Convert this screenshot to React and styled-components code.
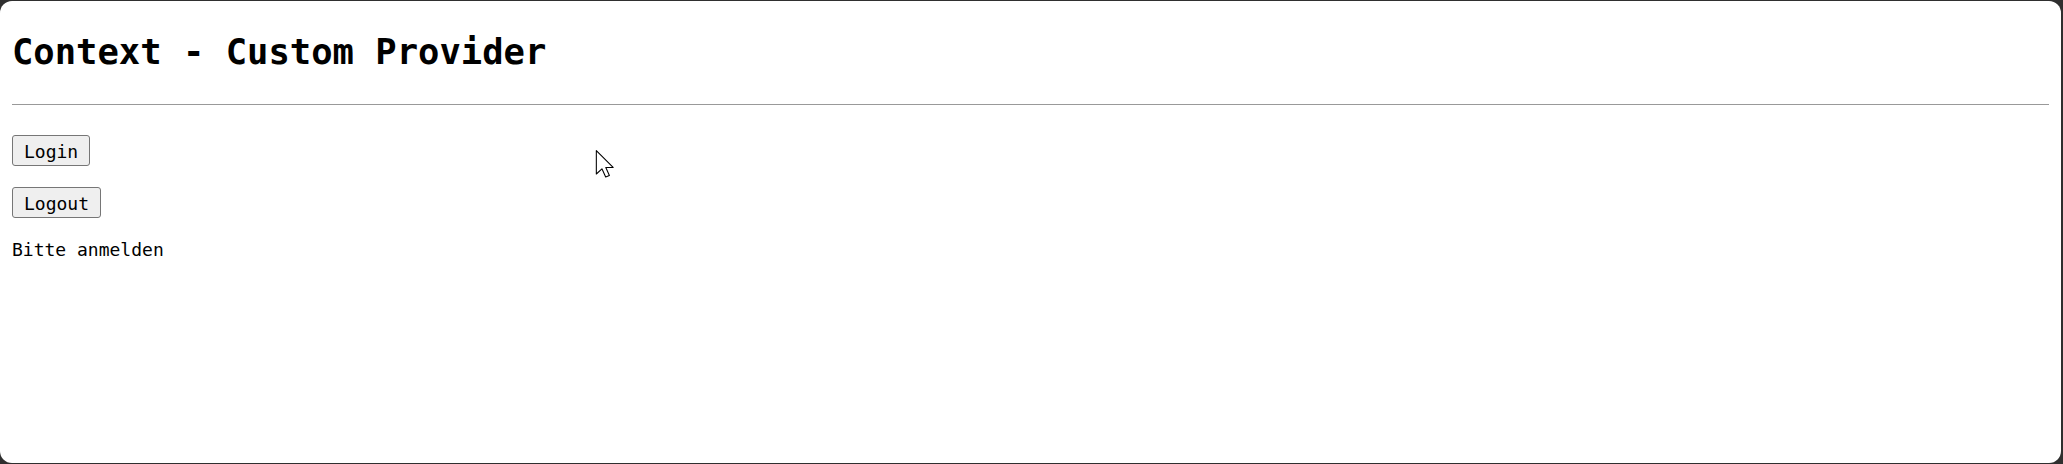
import React from "react";
import styled, { createGlobalStyle } from "styled-components";

const GlobalStyle = createGlobalStyle`
  html, body {
    margin: 0;
    padding: 0;
    background: #2f2f2f;
  }
`;

const Frame = styled.div`
  box-sizing: border-box;
  height: 100vh;
  padding: 1px 2px 1px 0;
`;

const Window = styled.div`
  position: relative;
  box-sizing: border-box;
  height: 100%;
  background: #ffffff;
  border-radius: 12px;
  padding: 30px 12px 0 12px;
  display: flex;
  flex-direction: column;
  align-items: flex-start;
  font-family: "DejaVu Sans Mono", "Liberation Mono", monospace;
  color: #000;
  overflow: hidden;
`;

const Title = styled.h1`
  margin: 0;
  font-size: 35.5px;
  line-height: 42px;
  font-weight: bold;
`;

const Rule = styled.hr`
  align-self: stretch;
  margin: 31px 0 0 0;
  border: none;
  border-top: 1px solid #999999;
  height: 0;
`;

const Button = styled.button`
  margin-top: ${(p) => p.gap}px;
  font-family: inherit;
  font-size: 18px;
  line-height: 21px;
  padding: 5px 11px 3px;
  color: #000;
  background: #efefef;
  border: 1px solid #767676;
  border-radius: 3px;
  cursor: default;
`;

const Status = styled.p`
  margin: 21px 0 0 0;
  font-size: 18px;
  line-height: 22px;
`;

const Pointer = styled.svg`
  position: absolute;
  left: 595px;
  top: 148px;
`;

function Cursor() {
  return (
    <Pointer width="20" height="30" viewBox="0 0 15 22">
      <path
        d="M1 1 L1 18.5 L5.2 14.6 L8 20.8 L10.8 19.6 L8.1 13.6 L13.6 13.6 Z"
        fill="#fff"
        stroke="#000"
        strokeWidth="0.8"
        strokeLinejoin="round"
      />
    </Pointer>
  );
}

export default function App() {
  const [loggedIn, setLoggedIn] = React.useState(false);

  return (
    <>
      <GlobalStyle />
      <Frame>
        <Window>
          <Title>Context - Custom Provider</Title>
          <Rule />
          <Button gap={30} onClick={() => setLoggedIn(true)}>
            Login
          </Button>
          <Button gap={21} onClick={() => setLoggedIn(false)}>
            Logout
          </Button>
          <Status>{loggedIn ? "Willkommen" : "Bitte anmelden"}</Status>
          <Cursor />
        </Window>
      </Frame>
    </>
  );
}
